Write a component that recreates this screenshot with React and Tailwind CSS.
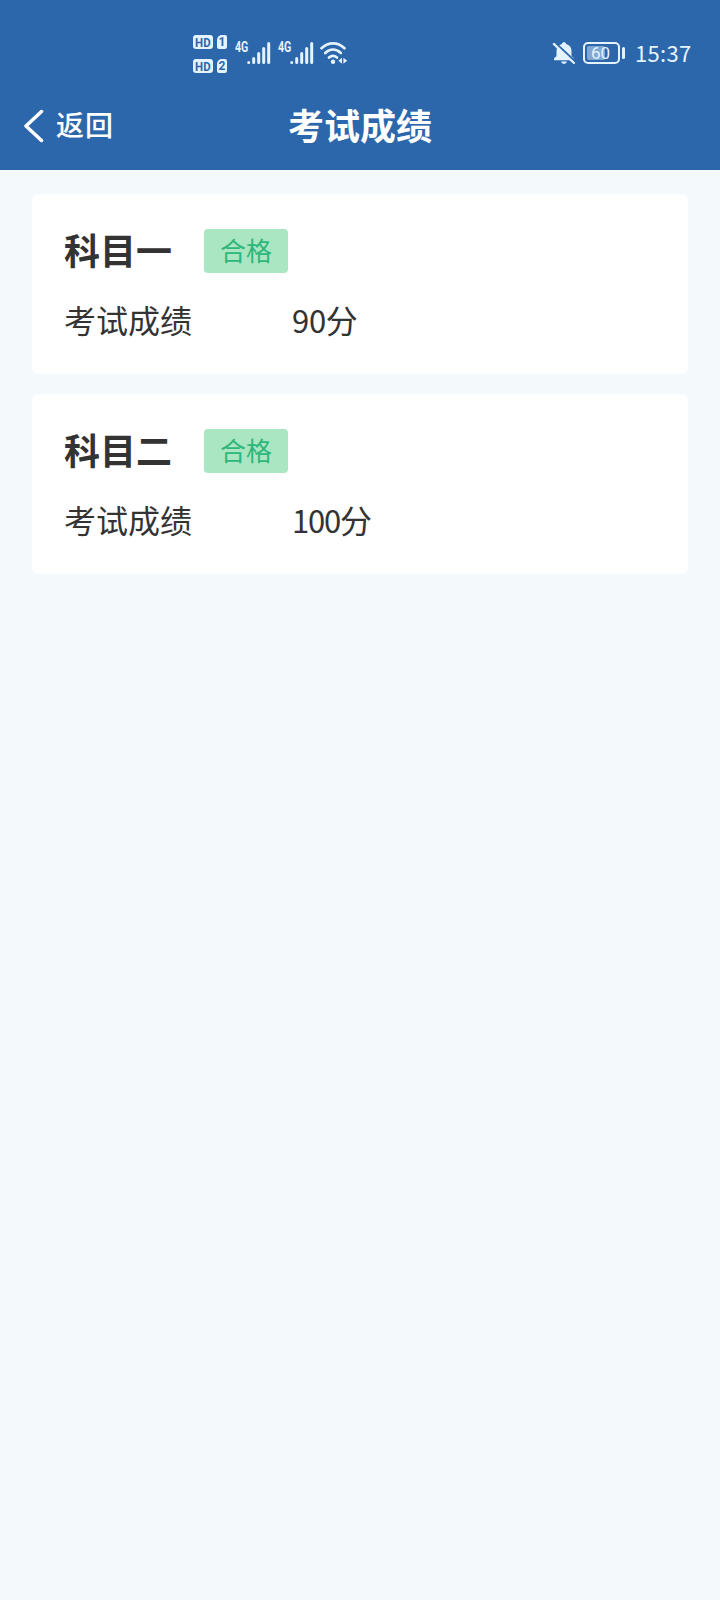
const subjects = [
  { name: "科目一", status: "合格", score: "90", tracking: "tracking-[-0.3px]" },
  { name: "科目二", status: "合格", score: "100", tracking: "tracking-[-1.2px]" },
];

function SimBadge({ slot }) {
  return (
    <div className="flex h-3.5 gap-1 text-[13px] leading-[15px] font-bold text-[#2c66ab]">
      <span className="flex w-5 justify-center rounded-[3px] bg-[#e4f3ff]">
        <span className="scale-x-[0.88]">HD</span>
      </span>
      <span className="w-2.5 rounded-[2px] rounded-tl-[5px] bg-[#e4f3ff] text-center text-xs leading-[15px]">
        {slot}
      </span>
    </div>
  );
}

function Signal() {
  return (
    <div className="flex h-[22px] w-9">
      <span className="w-3 origin-left scale-x-[0.76] text-[14px] leading-[11px] font-bold">
        4G
      </span>
      <svg width="24" height="22" viewBox="0 0 24 22" fill="none">
        <path
          d="M1.7 20.4v.1M6.7 16.5v4M11.7 11.5v9M16.7 6.5v14M21.7 1.5v19"
          stroke="currentColor"
          strokeWidth="3"
          strokeLinecap="round"
        />
      </svg>
    </div>
  );
}

function Wifi() {
  return (
    <svg width="28" height="22" viewBox="0 0 28 22" fill="none">
      <g stroke="currentColor" strokeWidth="2.7" strokeLinecap="round">
        <path d="M1.5 6.2C8.5-.2 17.5-.2 24.5 6.2" />
        <path d="M5.2 11c4.8-4.4 10.8-4.4 15.6 0" />
        <path d="M9 15.6c2.5-2.2 5.5-2.2 8 0" />
      </g>
      <circle cx="13" cy="19.7" r="2.2" fill="currentColor" />
      <path d="M22 15.8v6l-3.6-3zM23.4 15.8v6l3.8-3z" fill="currentColor" />
    </svg>
  );
}

function BellOff() {
  return (
    <svg width="24" height="24" viewBox="0 0 24 24" fill="none">
      <path
        d="M2 19.2v-1.6l2.5-2.7V10c0-3.8 2-6.2 5.4-7.1C10.2.8 13.8.8 14.1 2.9c3.4.9 5.4 3.3 5.4 7.1v4.9l2.5 2.7v1.6z"
        fill="currentColor"
      />
      <path d="M9.2 20.4h5.6c-.3 3.2-5.3 3.2-5.6 0z" fill="currentColor" />
      <path d="M2.2 1.2 24 21.4" stroke="#2c66ab" strokeWidth="2.5" />
      <path
        d="M1.8 2.9 22 22"
        stroke="currentColor"
        strokeWidth="2.2"
        strokeLinecap="round"
      />
    </svg>
  );
}

function Battery() {
  return (
    <div className="flex items-center gap-0.5">
      <div className="flex h-[22px] w-[37px] rounded-[5px] border-2 border-current p-0.5">
        <div className="h-full w-[18px] rounded-[2px] bg-[#80a8d5]">
          <span className="block w-[27px] text-center font-['Roboto',sans-serif] text-[17px] leading-[15px]">
            60
          </span>
        </div>
      </div>
      <div className="h-3 w-[3px] rounded-sm bg-current" />
    </div>
  );
}

function StatusBar() {
  return (
    <div className="flex h-[84px] pt-[22px] pr-7 pl-[193px] font-['Roboto',sans-serif] text-[#e4f3ff]">
      <div className="flex flex-col gap-2.5 pt-[13px]">
        <SimBadge slot="1" />
        <SimBadge slot="2" />
      </div>
      <div className="ml-2 flex items-start pt-5">
        <Signal />
        <div className="ml-[7px]">
          <Signal />
        </div>
        <div className="ml-1.5">
          <Wifi />
        </div>
      </div>
      <div className="ml-auto flex h-[62px] items-center">
        <BellOff />
        <div className="ml-[7px]">
          <Battery />
        </div>
        <span className="ml-2.5 w-[57px] pb-0.5 font-['Noto_Sans_CJK_SC',sans-serif] text-[22px] leading-6 tracking-[0.3px] whitespace-nowrap">
          15:37
        </span>
      </div>
    </div>
  );
}

function NavBar() {
  return (
    <div className="grid h-[86px] grid-cols-[1fr_auto_1fr] items-center pb-0.5 text-white">
      <div className="flex items-center gap-3 pl-6">
        <svg width="20" height="34" viewBox="0 0 20 34" fill="none">
          <path
            d="M17.5 2.5 2 17l15.5 14.5"
            stroke="currentColor"
            strokeWidth="3.5"
            strokeLinecap="round"
            strokeLinejoin="round"
          />
        </svg>
        <span className="pb-1 text-[28px] leading-8 font-medium tracking-[1px]">
          返回
        </span>
      </div>
      <h1 className="pb-1 text-4xl font-bold">考试成绩</h1>
    </div>
  );
}

function SubjectCard({ name, status, score, tracking }) {
  return (
    <div className="h-[180px] rounded-[6px] bg-white px-8 pt-[35px]">
      <div className="flex h-11 items-center gap-8">
        <h2 className="pb-1 text-4xl leading-10 font-bold">{name}</h2>
        <span className="h-11 rounded-[4px] bg-[#a9e6c1] px-4 text-[26px] leading-[42px] text-[#2fb67c]">
          {status}
        </span>
      </div>
      <div className="mt-[26px] flex text-[32px] leading-10">
        <span className="w-[228px]">考试成绩</span>
        <span>
          <span className={`text-[31px] ${tracking}`}>{score}</span>分
        </span>
      </div>
    </div>
  );
}

export default function App() {
  return (
    <div className="min-h-[1600px] bg-[#f4f9fb] font-['Noto_Sans_CJK_SC',sans-serif] text-[#333]">
      <header className="h-[170px] bg-[#2c66ab]">
        <StatusBar />
        <NavBar />
      </header>
      <main className="flex flex-col gap-5 px-8 pt-6">
        {subjects.map((s) => (
          <SubjectCard key={s.name} {...s} />
        ))}
      </main>
    </div>
  );
}
